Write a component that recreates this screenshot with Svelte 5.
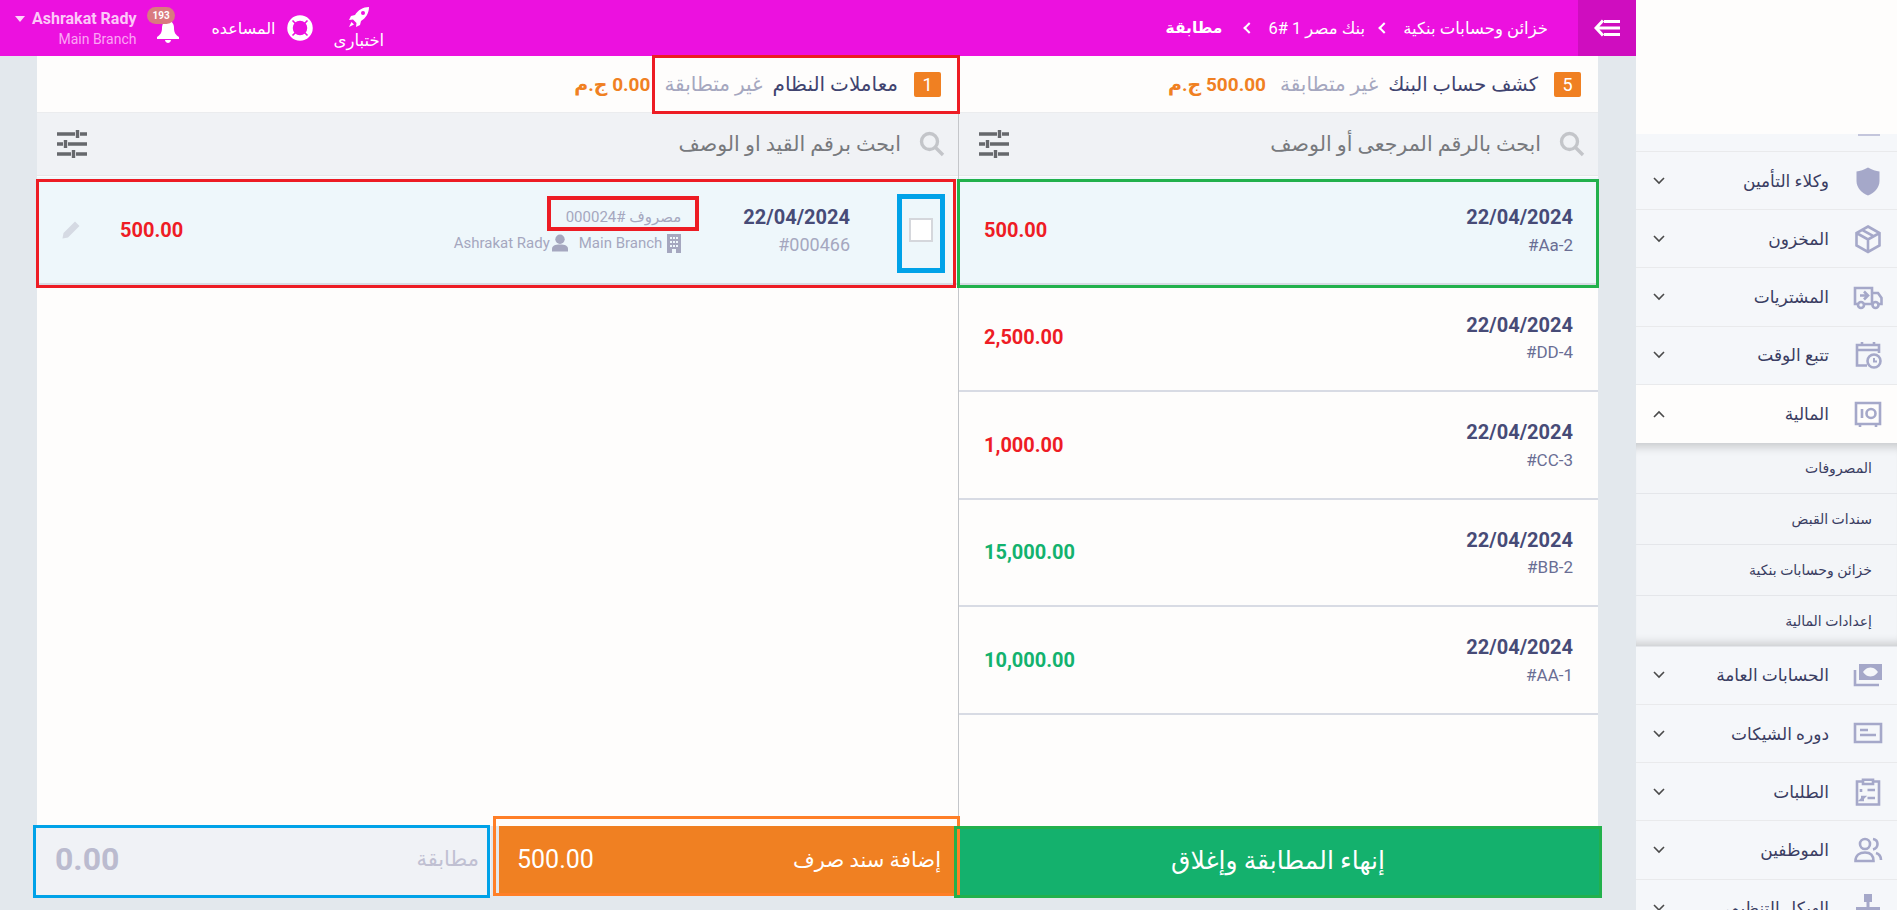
<script>
	const menu = [
		{ label: 'وكلاء التأمين', fill: 'M15 1.5 C19 4 23 5 26.5 5.5 V15 C26.5 22 21 27 15 29.5 C9 27 3.5 22 3.5 15 V5.5 C7 5 11 4 15 1.5 Z' },
		{ label: 'المخزون', stroke: 'M15 2.5 L26.5 9 V21.5 L15 28 L3.5 21.5 V9 Z M3.5 9 L15 15.5 L26.5 9 M15 15.5 V28 M9 5.8 L20.5 12.2' },
		{ label: 'المشتريات', stroke: 'M5 22 H2 V6 H19 V22 H11 M19 11 H25 L28.5 16 V22 H26 M7 13.5 H14 M11 9.5 L15 13.5 L11 17.5', circles: [[8, 23, 3], [22.5, 23, 3]] },
		{ label: 'تتبع الوقت', stroke: 'M14 25.5 H4 V5 H26 V13 M9 2 V6 M21 2 V6 M4 10 H26', circles: [[21, 21, 6.5]], extra: 'M21 18 V21.5 H24' },
		{ label: 'المالية', open: true, stroke: 'M3 4 H27 V25 H3 Z M7 25 V28 M23 25 V28 M9 10 V19', circles: [[18, 14.5, 4.5]] }
	];
	const lower = [
		{ label: 'الحسابات العامة', fill: 'M6 4 H29 V20 H6 Z M17.5 7.5 C13.5 7.5 11 10.5 10 12 C11 13.5 13.5 16.5 17.5 16.5 C21.5 16.5 24 13.5 25 12 C24 10.5 21.5 7.5 17.5 7.5 Z', stroke: 'M2 10 V25 H26' },
		{ label: 'دوره الشيكات', stroke: 'M2 5 H28 V23 H2 Z M7 11 H15 M7 16 H23' },
		{ label: 'الطلبات', stroke: 'M10 4.5 H4 V27.5 H26 V4.5 H20 M10 2.8 H20 V7 H10 Z M14.5 13 H22 M14.5 21 H22 M8 12 V15 M8 20 H11 L8 23 H11' },
		{ label: 'الموظفين', stroke: 'M2.5 26 C2.5 20 7 17.5 12 17.5 C17 17.5 20.5 20 20.5 26 Z M20 4 C26 5 26 13 20 14.5 M23 18 C26 19 28 22 28 25', circles: [[12, 9, 5]] },
		{ label: 'الهيكل التنظيمي', fill: 'M11 1 H19 V9 H16.5 V14 H27 V20 H3 V14 H13.5 V9 H11 Z' }
	];
	const sub = ['المصروفات', 'سندات القبض', 'خزائن وحسابات بنكية', 'إعدادات المالية'];
	const bankRows = [
		{ ref: '#Aa-2', amount: '500.00', out: true, active: true },
		{ ref: '#DD-4', amount: '2,500.00', out: true },
		{ ref: '#CC-3', amount: '1,000.00', out: true },
		{ ref: '#BB-2', amount: '15,000.00' },
		{ ref: '#AA-1', amount: '10,000.00' }
	];
	const marks = [
		{ x: 652, y: 55, w: 308, h: 59, c: '#ed1c24', b: 3 },
		{ x: 36, y: 179, w: 920, h: 109, c: '#ed1c24', b: 3 },
		{ x: 547, y: 196, w: 152, h: 35, c: '#ed1c24', b: 4 },
		{ x: 897, y: 194, w: 48, h: 79, c: '#00a2e8', b: 5 },
		{ x: 957, y: 179, w: 642, h: 109, c: '#22b14c', b: 3 },
		{ x: 33, y: 825, w: 457, h: 73, c: '#00a2e8', b: 3 },
		{ x: 493, y: 816, w: 467, h: 80, c: '#ff7f27', b: 3 },
		{ x: 954, y: 826, w: 648, h: 72, c: '#22b14c', b: 3 }
	];
</script>

{#snippet sideIcon(it)}
	<svg class="side-icon" viewBox="0 0 30 30">
		{#if it.fill}<path d={it.fill} fill="#a5a8c9" fill-rule="evenodd" stroke="none" />{/if}
		{#if it.stroke}<path d={it.stroke} />{/if}
		{#each it.circles ?? [] as c}<circle cx={c[0]} cy={c[1]} r={c[2]} />{/each}
		{#if it.extra}<path d={it.extra} stroke-width="2" />{/if}
	</svg>
{/snippet}

{#snippet menuRow(it)}
	<div class="side-row" class:open={it.open}>
		{@render sideIcon(it)}
		<span class="side-label">{it.label}</span>
		<svg class="chev" viewBox="0 0 12 8"><path d={it.open ? 'M1 7 L6 2 L11 7' : 'M1 1 L6 6 L11 1'} /></svg>
	</div>
{/snippet}

{#snippet sliders()}
	<svg class="sliders" viewBox="0 0 30 28">
		<path d="M0 4 H18 M23 4 H30 M20.5 0 V8 M0 14 H6 M11 14 H30 M8.5 10 V18 M0 24 H14 M19 24 H30 M16.5 20 V28" />
	</svg>
{/snippet}

{#snippet search()}
	<svg class="search" viewBox="0 0 26 26">
		<circle cx="10.5" cy="10.5" r="8" /><path d="M16.5 16.5 L24 24" />
	</svg>
{/snippet}

<div class="app" dir="rtl">
	<aside class="sidebar">
		<div class="logo"></div>
		<div class="side-peek"><i></i></div>
		{#each menu as it}
			{@render menuRow(it)}
		{/each}
		<div class="submenu">
			{#each sub as s}
				<div class="sub-row">{s}</div>
			{/each}
		</div>
		{#each lower as it}
			{@render menuRow(it)}
		{/each}
	</aside>

	<div class="main">
		<header class="topbar">
			<div class="toggle">
				<svg width="26" height="18" viewBox="0 0 26 18"><path d="M9 1.5 L2 9 L9 16.5 M3 9 H26 M10 2.5 H26 M10 15.5 H26" /></svg>
			</div>
			<nav class="crumbs">
				<span>خزائن وحسابات بنكية</span>
				<i class="sep"></i>
				<span>بنك مصر 1 #6</span>
				<i class="sep"></i>
				<b>مطابقة</b>
			</nav>
			<div class="tools">
				<div class="tool-test">
					<svg width="22" height="22" viewBox="0 0 22 22"><path d="M21 1 C15 1 10 4 7 9 L3 10 L1 14 L5 13.5 L8.5 17 L8 21 L12 19 L13 15 C18 12 21 7 21 1 Z M3.5 16 L1 21 L6 18.5 Z" fill="#fff" fill-rule="evenodd" /><circle cx="15" cy="7" r="2" fill="#ec11df" /></svg>
					<span>اختبارى</span>
				</div>
				<div class="tool-help">
					<svg width="26" height="26" viewBox="0 0 26 26"><circle cx="13" cy="13" r="10" fill="none" stroke="#fff" stroke-width="5.5" /><path d="M5.5 5.5 L9 9 M20.5 5.5 L17 9 M5.5 20.5 L9 17 M20.5 20.5 L17 17" stroke="#ec11df" stroke-width="1.6" /></svg>
					<span>المساعده</span>
				</div>
				<div class="bell">
					<svg width="24" height="24" viewBox="0 0 24 24"><path d="M12 1 C8 2 6 5 6 9 C6 14 4 16 1 18 V20 H23 V18 C20 16 18 14 18 9 C18 5 16 2 12 1 Z M9 21 H15 C15 23 13 24 12 24 C11 24 9 23 9 21 Z" fill="#fff" /></svg>
					<span class="badge">193</span>
				</div>
				<div class="user" dir="ltr">
					<i class="caret"></i>
					<div class="user-text">
						<div class="user-name">Ashrakat Rady</div>
						<div class="user-branch">Main Branch</div>
					</div>
				</div>
			</div>
		</header>

		<div class="panels">
			<section class="panel bank">
				<div class="panel-head">
					<span class="count">5</span>
					<span class="title">كشف حساب البنك</span>
					<span class="state">غير متطابقة</span>
					<span class="sum">500.00 ج.م</span>
				</div>
				<div class="search-bar">
					{@render search()}
					<span class="placeholder">ابحث بالرقم المرجعى أو الوصف</span>
					{@render sliders()}
				</div>
				<div class="list">
					{#each bankRows as r}
						<div class="row" class:active={r.active}>
							<div class="ident">
								<div class="date">22/04/2024</div>
								<div class="ref" dir="ltr">{r.ref}</div>
							</div>
							<div class="amount" class:out={r.out}>{r.amount}</div>
						</div>
					{/each}
				</div>
			</section>

			<section class="panel system">
				<div class="panel-head">
					<span class="count">1</span>
					<span class="title">معاملات النظام</span>
					<span class="state">غير متطابقة</span>
					<span class="sum">0.00 ج.م</span>
				</div>
				<div class="search-bar">
					{@render search()}
					<span class="placeholder">ابحث برقم القيد او الوصف</span>
					{@render sliders()}
				</div>
				<div class="list">
					<div class="row active">
						<span class="check"></span>
						<div class="ident">
							<div class="date">22/04/2024</div>
							<div class="ref muted" dir="ltr">#000466</div>
						</div>
						<div class="details">
							<div class="desc">مصروف #000024</div>
							<div class="meta">
								<svg width="14" height="19" viewBox="0 0 14 19"><path d="M0 0 H14 V19 H9 V15 H5 V19 H0 Z M3 3 V5 H5 V3 Z M6 3 V5 H8 V3 Z M9 3 V5 H11 V3 Z M3 7 V9 H5 V7 Z M6 7 V9 H8 V7 Z M9 7 V9 H11 V7 Z M3 11 V13 H5 V11 Z M6 11 V13 H8 V11 Z M9 11 V13 H11 V11 Z" fill="#a5a7bf" fill-rule="evenodd" /></svg>
								<span>Main Branch</span>
								<svg class="person" width="16" height="18" viewBox="0 0 17 18"><circle cx="8.5" cy="5" r="5" fill="#a5a7bf" /><path d="M0 18 V15 C0 12 3 10.5 8.5 10.5 C14 10.5 17 12 17 15 V18 Z" fill="#a5a7bf" /></svg>
								<span>Ashrakat Rady</span>
							</div>
						</div>
						<div class="amount out">500.00</div>
						<svg class="pencil" width="18" height="18" viewBox="0 0 18 18"><path d="M13 0.5 L17.5 5 L6 16.5 L0.5 17.5 L1.5 12 Z" fill="#d5dae3" /></svg>
					</div>
				</div>
			</section>
		</div>

		<div class="actions">
			<button class="finish" type="button">إنهاء المطابقة وإغلاق</button>
			<button class="voucher" type="button">
				<span class="voucher-label">إضافة سند صرف</span>
				<span class="voucher-sum">500.00</span>
			</button>
			<div class="matched">
				<span class="matched-label">مطابقة</span>
				<span class="matched-sum">0.00</span>
			</div>
		</div>
	</div>

	{#each marks as m}
		<div class="mark" style="left:{m.x}px;top:{m.y}px;width:{m.w}px;height:{m.h}px;border-color:{m.c};border-width:{m.b}px"></div>
	{/each}
</div>

<style>
	:global(body) {
		margin: 0;
		overflow: hidden;
		background: #e3e8ed;
	}

	.app {
		position: relative;
		display: flex;
		width: 1897px;
		height: 910px;
		overflow: hidden;
		font-family: Roboto, "Noto Sans", "DejaVu Sans", sans-serif;
		color: #3a3d62;
	}

	.sidebar {
		width: 261px;
		flex: none;
		background: #f5f7fa;
		overflow: hidden;
	}

	.logo {
		height: 134px;
		background: #fefdfc;
	}

	.side-peek {
		height: 18px;
		box-sizing: border-box;
		padding-right: 17px;
		border-bottom: 1px solid #e9eaec;
	}

	.side-peek i {
		display: block;
		width: 22px;
		height: 2px;
		background: #c4c6dc;
	}

	.side-row {
		display: flex;
		align-items: center;
		height: 58.2px;
		box-sizing: border-box;
		padding: 0 14px 0 17px;
		border-bottom: 1px solid #e9eaec;
	}

	.side-row.open {
		background: #fefdfc;
		border-bottom: none;
		height: 58px;
	}

	.side-icon {
		width: 30px;
		height: 30px;
		flex: none;
		fill: none;
		stroke: #a5a8c9;
		stroke-width: 2.6;
	}

	.side-label {
		margin-right: 24px;
		font-size: 17px;
		font-weight: 500;
	}

	.chev {
		width: 12px;
		height: 8px;
		margin-right: auto;
		fill: none;
		stroke: #4a4a4a;
		stroke-width: 1.6;
	}

	.submenu {
		background: #f3f5f8;
		box-shadow: inset 0 12px 10px -8px rgba(0, 0, 0, 0.18), inset 0 -12px 10px -8px rgba(0, 0, 0, 0.18);
	}

	.sub-row {
		display: flex;
		align-items: center;
		height: 51px;
		box-sizing: border-box;
		padding-right: 25px;
		border-bottom: 1px solid #e4e6ea;
		font-size: 14px;
		font-weight: 500;
	}

	.main {
		width: 1636px;
		flex: none;
		display: flex;
		flex-direction: column;
	}

	.topbar {
		display: flex;
		align-items: center;
		height: 56px;
		flex: none;
		background: #ec11df;
		color: #fff;
	}

	.toggle {
		display: flex;
		align-items: center;
		justify-content: center;
		width: 58px;
		height: 100%;
		background: #cf0dbf;
	}

	.toggle path {
		fill: none;
		stroke: #fff;
		stroke-width: 3;
	}

	.crumbs {
		display: flex;
		align-items: center;
		gap: 15px;
		margin-right: 30px;
		font-size: 16.5px;
	}

	.crumbs b {
		margin-right: 8px;
		font-size: 15.5px;
		font-weight: 700;
	}

	.sep {
		width: 6px;
		height: 6px;
		border-left: 2px solid #fff;
		border-bottom: 2px solid #fff;
		transform: rotate(45deg);
	}

	.tools {
		display: flex;
		align-items: center;
		margin-right: auto;
		padding-left: 15px;
		height: 100%;
	}

	.tool-test {
		display: flex;
		flex-direction: column;
		align-items: center;
		gap: 3px;
		font-size: 16.5px;
		margin-left: 21px;
	}

	.tool-help {
		display: flex;
		align-items: center;
		gap: 11px;
		font-size: 16px;
		margin-left: 31px;
	}

	.bell {
		position: relative;
		margin-left: 20px;
		height: 24px;
		margin-top: 6px;
	}

	.badge {
		position: absolute;
		left: -9px;
		top: -12px;
		padding: 0 5px;
		height: 17px;
		line-height: 17px;
		border-radius: 9px;
		background: #d97a80;
		font-size: 10px;
		font-weight: 700;
		direction: ltr;
	}

	.user {
		display: flex;
		align-items: flex-start;
		gap: 7px;
	}

	.caret {
		margin-top: 8px;
		border-left: 5px solid transparent;
		border-right: 5px solid transparent;
		border-top: 6px solid #fdd3fa;
	}

	.user-text {
		text-align: right;
	}

	.user-name {
		font-size: 16px;
		font-weight: 700;
		line-height: 22px;
		color: #fcc8f8;
	}

	.user-branch {
		font-size: 14px;
		line-height: 18px;
		color: #fba6f5;
	}

	.panels {
		flex: 1;
		display: flex;
		min-height: 0;
		margin: 0 38px 0 37px;
		background: #fefdfc;
	}

	.panel {
		display: flex;
		flex-direction: column;
		min-width: 0;
	}

	.bank {
		width: 640px;
		flex: none;
		border-left: 1px solid #c4c6ca;
		box-sizing: border-box;
	}

	.system {
		flex: 1;
	}

	.panel-head {
		display: flex;
		align-items: center;
		height: 57px;
		flex: none;
		box-sizing: border-box;
		padding-right: 17px;
		font-size: 20px;
		border-bottom: 1px solid #ebecee;
	}

	.count {
		width: 27px;
		height: 25px;
		line-height: 25px;
		text-align: center;
		border-radius: 2px;
		background: #f08022;
		color: #fff;
		font-size: 18px;
		margin-left: 16px;
	}

	.title {
		font-weight: 500;
		color: #40436f;
		margin-left: 10px;
	}

	.bank .title {
		font-size: 19.5px;
	}

	.state {
		color: #a5a7bf;
		margin-left: 14px;
	}

	.sum {
		font-size: 19px;
		font-weight: 700;
		color: #f08022;
	}

	.search-bar {
		display: flex;
		align-items: center;
		height: 63px;
		flex: none;
		box-sizing: border-box;
		padding: 0 13px 0 20px;
		background: #f0f2f5;
		border-bottom: 1px solid #e7e8ea;
	}

	.search {
		width: 26px;
		height: 26px;
		flex: none;
		fill: none;
		stroke: #c3c5c9;
		stroke-width: 3.4;
	}

	.placeholder {
		margin-right: 18px;
		font-size: 20.6px;
		color: #77797d;
	}

	.sliders {
		width: 30px;
		height: 28px;
		margin-right: auto;
		fill: none;
		stroke: #66686c;
		stroke-width: 3.4;
	}

	.list {
		flex: 1;
		padding-top: 1px;
	}

	.row {
		display: flex;
		align-items: center;
		height: 107.5px;
		box-sizing: border-box;
		padding: 0 25px;
		border-bottom: 2px solid #d8dbe4;
	}

	.row.active {
		background: #eef7fb;
	}

	.date {
		font-size: 20px;
		font-weight: 700;
		line-height: 26px;
		color: #474b77;
	}

	.ref {
		margin-top: 3.5px;
		font-size: 17px;
		line-height: 22px;
		text-align: right;
		color: #6a6e94;
	}

	.ref.muted {
		color: #a5a7bf;
		font-size: 18px;
	}

	.amount {
		margin-right: auto;
		font-size: 20px;
		font-weight: 700;
		color: #13b26e;
	}

	.amount.out {
		color: #ee1c25;
	}

	.check {
		width: 24px;
		height: 24px;
		box-sizing: border-box;
		flex: none;
		background: #fff;
		border: 2px solid #d5d7dc;
		margin-left: 59px;
	}

	.details {
		margin-right: 62px;
		font-size: 15px;
		color: #a5a7bf;
	}

	.desc {
		font-size: 15px;
		line-height: 20px;
	}

	.meta {
		display: flex;
		align-items: center;
		gap: 5px;
		margin-top: 7px;
	}

	.person {
		margin-right: 6px;
		margin-left: -3px;
	}

	.pencil {
		margin-right: 40px;
		flex: none;
	}

	.actions {
		display: flex;
		flex: none;
		height: 72px;
		margin: 0 35px 12px 36px;
	}

	.finish {
		width: 646px;
		flex: none;
		border: none;
		padding: 0 0 3px;
		background: #14b16d;
		color: #fff;
		font: inherit;
		font-size: 25px;
	}

	.voucher {
		display: flex;
		align-items: center;
		justify-content: space-between;
		width: 456px;
		flex: none;
		margin: 0 0 2px 8px;
		border: none;
		padding: 0 14px 3px 18px;
		background: #f08022;
		color: #fff;
		font: inherit;
		font-size: 21px;
	}

	.voucher-sum {
		font-size: 25px;
	}

	.matched {
		flex: 1;
		display: flex;
		align-items: center;
		justify-content: space-between;
		margin-bottom: 3px;
		padding: 0 12px 3px 19px;
		background: #f0f2f6;
	}

	.matched-label {
		font-size: 21px;
		color: #c0c0d2;
	}

	.matched-sum {
		font-size: 32px;
		font-weight: 700;
		color: #bbbbcf;
	}

	.mark {
		position: absolute;
		box-sizing: border-box;
		border-style: solid;
		pointer-events: none;
	}
</style>
